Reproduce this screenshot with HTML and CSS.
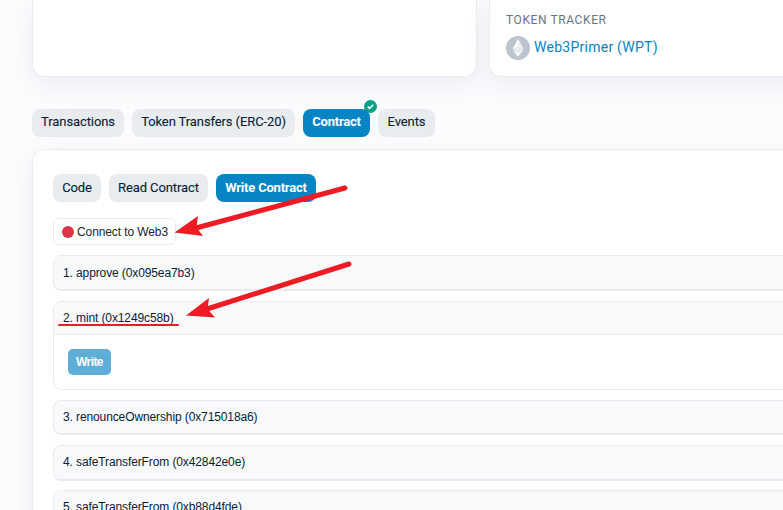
FILE: index.html
```
<!DOCTYPE html>
<html lang="en">
<head>
<meta charset="utf-8">
<title>Contract</title>
<link rel="stylesheet" href="styles.css">
</head>
<body>
<main class="page">
  <section class="summary">
    <div class="card card-info"></div>
    <div class="card card-more">
      <h4 class="label">TOKEN TRACKER</h4>
      <a class="token">
        <svg class="token-icon" viewBox="0 0 24 24"><circle cx="12" cy="12" r="12" fill="#bcc4d0"/><path d="M12 3l5.300 9.800L12 15.900l-5.300-3.100z" fill="#fff"/><path d="M12 3l5.300 9.800L12 15.900z" fill="#f1f2f3"/><path d="M6.700 13.600l5.300 3 5.300-3L12 20.800z" fill="#fff"/><path d="M12 16.600l5.300-3L12 20.800z" fill="#f1f2f3"/><path d="M6.700 12.800l5.300-2.400 5.300 2.400-5.300 3.100z" fill="#e8e9eb"/></svg>
        <span>Web3Primer (WPT)</span>
      </a>
    </div>
  </section>
  <nav class="pills">
    <a class="pill w-transactions">Transactions</a>
    <a class="pill w-transfers">Token Transfers (ERC-20)</a>
    <a class="pill active w-contract">Contract
      <svg class="badge" viewBox="0 0 13 13"><circle cx="6.5" cy="6.5" r="6.5" fill="#00a186"/><path d="M3.7 6.6l1.9 1.8 3.7-3.6" fill="none" stroke="#fff" stroke-width="1.5"/></svg>
    </a>
    <a class="pill w-events">Events</a>
  </nav>
  <section class="panel">
    <nav class="pills inner">
      <a class="pill w-code">Code</a>
      <a class="pill w-read">Read Contract</a>
      <a class="pill active w-write">Write Contract</a>
    </nav>
    <button class="connect"><span class="dot"></span><span>Connect to Web3</span></button>
    <div class="methods">
      <div class="method first"><div class="method-head">1. approve (0x095ea7b3)</div></div>
      <div class="method open">
        <div class="method-head">2. mint (0x1249c58b)</div>
        <div class="method-body"><button class="write">Write</button></div>
      </div>
      <div class="method short"><div class="method-head">3. renounceOwnership (0x715018a6)</div></div>
      <div class="method fourth"><div class="method-head">4. safeTransferFrom (0x42842e0e)</div></div>
      <div class="method"><div class="method-head">5. safeTransferFrom (0xb88d4fde)</div></div>
    </div>
  </section>
  <svg class="marks" viewBox="0 0 783 510">
    <g fill="none" stroke="#ed1c24" stroke-linecap="round">
      <path d="M345 188L196 228" stroke-width="5"/>
      <path d="M349 264L207 309" stroke-width="5"/>
      <path d="M59 325H178" stroke-width="2"/>
    </g>
    <path d="M174.500 232.500L198 216 196.500 227.500 203 236z" fill="#ed1c24"/>
    <path d="M186 315.500L209 298 207.500 309 215 317.500z" fill="#ed1c24"/>
  </svg>
</main>
</body>
</html>
```
FILE: styles.css
```
* { box-sizing: border-box; }
body {
  margin: 0;
  background: #fcfcfe;
  color: #081d35;
  font-family: Roboto, "Liberation Sans", sans-serif;
}
.page {
  position: relative;
  width: 783px;
  height: 510px;
  overflow: hidden;
  padding-left: 32px;
}
.summary { display: flex; gap: 12px; height: 77px; }
.card {
  background: #fff;
  border: 1px solid #e9ecef;
  border-top: 0;
  border-radius: 0 0 12px 12px;
  box-shadow: 0 8px 24px rgba(173, 181, 200, .2);
}
.card-info { width: 445px; flex: none; }
.card-more { width: 445px; flex: none; padding: 12px 16px; }
.label {
  margin: 0;
  font-size: 12px;
  line-height: 16px;
  font-weight: 400;
  letter-spacing: .6px;
  color: #6c757d;
}
.token {
  display: flex;
  gap: 4px;
  margin-top: 8px;
  font-size: 14px;
  line-height: 22px;
  letter-spacing: .26px;
  color: #0784c3;
}
.token-icon { width: 24px; height: 24px; }
.pills { display: flex; gap: 8px; }
.summary + .pills { margin-top: 32px; }
.pill {
  position: relative;
  height: 28px;
  border-radius: 8px;
  background: #e9ecef;
  font-size: 13px;
  line-height: 26px;
  font-weight: 400;
  letter-spacing: -.1px;
  -webkit-text-stroke: .1px currentColor;
  text-align: center;
  white-space: nowrap;
}
.inner .pill { line-height: 28px; }
.pill.active {
  background: #0784c3;
  color: #fff;
  font-weight: 700;
  letter-spacing: -.2px;
  -webkit-text-stroke: 0;
}
.w-transactions { width: 92px; }
.w-transfers { width: 163px; }
.w-contract { width: 67px; }
.w-events { width: 57px; }
.w-code { width: 48px; }
.w-read { width: 99px; }
.w-write { width: 100px; }
.badge { position: absolute; top: -9px; right: -7px; width: 13px; height: 13px; }
.panel {
  width: 902px;
  height: 500px;
  margin-top: 12px;
  padding: 24px 20px;
  border: 1px solid #e9ecef;
  border-radius: 12px;
  background: #fff;
  box-shadow: 0 8px 24px rgba(173, 181, 200, .2);
}
.connect {
  display: flex;
  align-items: center;
  gap: 3px;
  width: 123px;
  height: 27px;
  margin: 16px 0 10px;
  padding: 0 0 0 8px;
  border: 1px solid #e9ecef;
  border-radius: 6px;
  background: #fff;
  color: #212529;
  font: 12px "Liberation Sans", sans-serif;
  letter-spacing: -.1px;
  white-space: nowrap;
}
.dot { width: 12px; height: 12px; border-radius: 50%; background: #dc3545; }
.methods {
  display: flex;
  flex-direction: column;
  gap: 10px;
  font-family: "Liberation Sans", sans-serif;
  font-size: 12px;
  letter-spacing: -.11px;
}
.method {
  height: 36px;
  border: 1px solid #e9ecef;
  border-bottom-width: 2px;
  border-radius: 8px;
  background: #f8f9fb;
  overflow: hidden;
}
.method.short { height: 35px; }
.method.fourth { margin-bottom: -1px; }
.method.open { height: 89px; border-bottom-width: 1px; background: #fff; }
.method-head { height: 33px; padding-left: 9px; line-height: 33px; background: #f8f9fb; }
.first .method-head { line-height: 35px; }
.open .method-head { border-bottom: 1px solid #e9ecef; }
.method-body { padding: 14px; }
.write {
  display: block;
  width: 43px;
  height: 26px;
  padding: 0;
  border: 0;
  border-radius: 5px;
  background: #5eaed8;
  color: #fff;
  font: bold 12px "Liberation Sans", sans-serif;
  letter-spacing: -.6px;
}
.marks { position: absolute; inset: 0; width: 783px; height: 510px; pointer-events: none; }
```
